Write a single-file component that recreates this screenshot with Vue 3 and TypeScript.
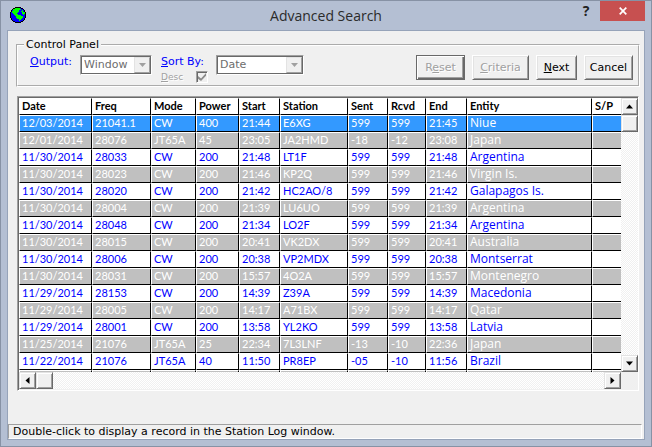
<script setup lang="ts">
import { ref } from 'vue'

type Entry = string[]

const columns: { name: string; width: number | null }[] = [
  { name: 'Date', width: 73 },
  { name: 'Freq', width: 59 },
  { name: 'Mode', width: 45 },
  { name: 'Power', width: 43 },
  { name: 'Start', width: 41 },
  { name: 'Station', width: 68 },
  { name: 'Sent', width: 40 },
  { name: 'Rcvd', width: 38 },
  { name: 'End', width: 41 },
  { name: 'Entity', width: 125 },
  { name: 'S/P', width: null }
]

const entries: Entry[] = [
  ['12/03/2014', '21041.1', 'CW', '400', '21:44', 'E6XG', '599', '599', '21:45', 'Niue', ''],
  ['12/01/2014', '28076', 'JT65A', '45', '23:05', 'JA2HMD', '-18', '-12', '23:08', 'Japan', ''],
  ['11/30/2014', '28033', 'CW', '200', '21:48', 'LT1F', '599', '599', '21:48', 'Argentina', ''],
  ['11/30/2014', '28023', 'CW', '200', '21:46', 'KP2Q', '599', '599', '21:46', 'Virgin Is.', ''],
  ['11/30/2014', '28020', 'CW', '200', '21:42', 'HC2AO/8', '599', '599', '21:42', 'Galapagos Is.', ''],
  ['11/30/2014', '28004', 'CW', '200', '21:39', 'LU6UO', '599', '599', '21:39', 'Argentina', ''],
  ['11/30/2014', '28048', 'CW', '200', '21:34', 'LO2F', '599', '599', '21:34', 'Argentina', ''],
  ['11/30/2014', '28015', 'CW', '200', '20:41', 'VK2DX', '599', '599', '20:41', 'Australia', ''],
  ['11/30/2014', '28006', 'CW', '200', '20:38', 'VP2MDX', '599', '599', '20:38', 'Montserrat', ''],
  ['11/30/2014', '28031', 'CW', '200', '15:57', '4O2A', '599', '599', '15:57', 'Montenegro', ''],
  ['11/29/2014', '28153', 'CW', '200', '14:39', 'Z39A', '599', '599', '14:39', 'Macedonia', ''],
  ['11/29/2014', '28005', 'CW', '200', '14:17', 'A71BX', '599', '599', '14:17', 'Qatar', ''],
  ['11/29/2014', '28001', 'CW', '200', '13:58', 'YL2KO', '599', '599', '13:58', 'Latvia', ''],
  ['11/25/2014', '21076', 'JT65A', '25', '22:34', '7L3LNF', '-13', '-10', '22:36', 'Japan', ''],
  ['11/22/2014', '21076', 'JT65A', '40', '11:50', 'PR8EP', '-05', '-10', '11:56', 'Brazil', '']
]

const selected = ref(0)
</script>

<template>
  <div class="window">
    <header class="titlebar">
      <svg class="globe" viewBox="0 0 16 16" shape-rendering="crispEdges" aria-hidden="true">
        <path fill="#000" d="M5 0h6v1h2v1h1v1h1v2h1v6h-1v2h-1v1h-1v1h-2v1H5v-1H3v-1H2v-1H1v-2H0V5h1V3h1V2h1V1h2z" />
        <path fill="#00f" d="M5 1h6v1h2v1h1v2h1v6h-1v2h-1v1h-2v1H5v-1H3v-1H2v-2H1V5h1V3h1V2h2z" />
        <path fill="#0f0" d="M5 1h5v1h1v1H9v2H8v1H7v1h1v1h3v1h2v2h-1v1h-1v1h-1v1H9v-2H7v-1H6V9H5V8H4V7H3V6H2V4h1V2h2zM12 3h1v2h2v2h-1v1h-1V7h-1V5h-1V4h1z" />
      </svg>
      <h1>Advanced Search</h1>
      <button class="help" type="button">?</button>
      <button class="close" type="button" aria-label="Close">
        <svg viewBox="0 0 8 8" aria-hidden="true"><path d="M.7.7l6.6 6.6M7.3.7L.7 7.3" stroke="#fff" stroke-width="1.7" /></svg>
      </button>
    </header>

    <main class="client">
      <fieldset class="panel">
        <legend>Control Panel</legend>
        <div class="controls">
          <label class="field" for="output"><u>O</u>utput:</label>
          <div class="combo combo-output">
            <select id="output" disabled><option>Window</option></select>
            <span class="drop"><svg viewBox="0 0 7 4"><path d="M0 0h7L3.500 4z" fill="#a0a0a0" /></svg></span>
          </div>
          <div class="sort">
            <label class="field" for="sort"><u>S</u>ort By:</label>
            <label class="desc"><span><u>D</u>esc</span><input type="checkbox" checked disabled /></label>
          </div>
          <div class="combo combo-sort">
            <select id="sort" disabled><option>Date</option></select>
            <span class="drop"><svg viewBox="0 0 7 4"><path d="M0 0h7L3.500 4z" fill="#a0a0a0" /></svg></span>
          </div>
          <div class="actions">
            <button class="push default w-reset" type="button" disabled>R<u>e</u>set</button>
            <button class="push w-criteria" type="button" disabled><u>C</u>riteria</button>
            <button class="push w-next" type="button"><u>N</u>ext</button>
            <button class="push w-cancel" type="button">Cancel</button>
          </div>
        </div>
      </fieldset>

      <section class="grid">
        <div class="sheet">
          <table>
            <colgroup>
              <col v-for="c in columns" :key="c.name" :style="c.width ? { width: c.width + 'px' } : {}" />
            </colgroup>
            <thead>
              <tr><th v-for="c in columns" :key="c.name" scope="col">{{ c.name }}</th></tr>
            </thead>
            <tbody>
              <tr v-for="(e, i) in entries" :key="i" :class="{ alt: i % 2 === 1, selected: i === selected }" @click="selected = i">
                <td v-for="(cell, j) in e" :key="j">{{ cell }}</td>
              </tr>
              <tr class="alt">
                <td v-for="c in columns" :key="c.name"></td>
              </tr>
            </tbody>
          </table>
        </div>
        <div class="track vertical">
          <button class="nub" type="button" aria-label="Scroll up"><svg viewBox="0 0 7 7"><path d="M0 5.500h7L3.500 1.500z" /></svg></button>
          <span class="nub"></span>
          <button class="nub last" type="button" aria-label="Scroll down"><svg viewBox="0 0 7 7"><path d="M0 1.500h7L3.500 5.500z" /></svg></button>
        </div>
        <div class="track">
          <button class="nub" type="button" aria-label="Scroll left"><svg viewBox="0 0 7 7"><path d="M5.500 0v7L1.500 3.500z" /></svg></button>
          <span class="nub"></span>
          <button class="nub last" type="button" aria-label="Scroll right"><svg viewBox="0 0 7 7"><path d="M1.500 0v7L5.500 3.500z" /></svg></button>
        </div>
      </section>

      <footer class="status">Double-click to display a record in the Station Log window.</footer>
    </main>
  </div>
</template>

<style>
body {
  margin: 0;
}
</style>

<style scoped>
* {
  box-sizing: border-box;
}
.window {
  display: flex;
  flex-direction: column;
  min-height: 100vh;
  padding: 0 6px 6px;
  border: 1px solid #8792a5;
  background: #b4bfd3;
  font: 11px/14px 'DejaVu Sans', sans-serif;
  color: #000;
}
.titlebar {
  display: flex;
  align-items: flex-start;
  height: 29px;
}
.globe {
  width: 16px;
  height: 16px;
  margin: 6px 0 0 3px;
}
h1 {
  flex: 1;
  margin: 4px 0 0 54px;
  font: 15px/22px 'Open Sans', sans-serif;
  font-size: 14px;
  color: #2b2b2b;
  text-align: center;
}
.help,
.close {
  padding: 0;
  border: 0;
}
.help {
  width: 28px;
  height: 20px;
  background: none;
  font: bold 14px/20px 'Open Sans', sans-serif;
  color: #222;
}
.close {
  display: grid;
  place-items: center;
  width: 45px;
  height: 20px;
  background: #c75050;
}
.close svg {
  width: 8px;
  height: 8px;
}
.client {
  flex: 1;
  display: flex;
  flex-direction: column;
  border: 1px solid #96a3b9;
  background: #f0f0f0;
}
.panel {
  min-width: 0;
  margin: 7px 4px 0 8px;
  padding: 3px 5px 2px 12px;
  border: 2px groove #fff;
}
legend {
  margin-left: -6px;
  padding: 0 2px;
}
.controls {
  display: flex;
  align-items: flex-start;
}
.field {
  height: 16px;
  color: #0000ff;
}
.combo {
  display: grid;
  height: 20px;
  border: 1px solid;
  border-color: #a0a0a0 #fff #fff #a0a0a0;
  box-shadow: inset 1px 1px #696969, inset -1px -1px #696969;
  background: #fff;
}
.combo-output {
  width: 72px;
}
.combo-sort {
  width: 88px;
  margin-left: 8px;
}
.controls > .field {
  width: 50px;
}
.combo select,
.drop {
  grid-area: 1 / 1;
}
.combo select {
  appearance: none;
  width: 100%;
  padding: 0 18px 0 3px;
  border: 0;
  background: none;
  font: 11px/18px 'DejaVu Sans', sans-serif;
  color: #6d6d6d;
  opacity: 1;
}
.drop {
  display: grid;
  place-items: center;
  justify-self: end;
  width: 16px;
  margin: 1px;
  border: 1px solid;
  border-color: #e3e3e3 #a0a0a0 #a0a0a0 #e3e3e3;
  background: #f0f0f0;
  pointer-events: none;
}
.drop svg {
  width: 7px;
  height: 4px;
}
.sort {
  width: 47px;
  margin-left: 9px;
}
.sort .field {
  display: block;
  white-space: nowrap;
}
.desc {
  display: flex;
  justify-content: space-between;
  height: 12px;
  font-size: 9px;
  line-height: 12px;
  color: #a0a0a0;
  text-shadow: 1px 1px #fff;
}
.desc input {
  appearance: none;
  width: 12px;
  height: 12px;
  margin: 0;
  border: 1px solid;
  border-color: #a0a0a0 #fff #fff #a0a0a0;
  box-shadow: inset 1px 1px #696969;
  background: #f0f0f0;
}
.desc input:checked::before {
  content: '';
  display: block;
  width: 8px;
  height: 8px;
  margin: 1px;
  background: #8c8c8c;
  clip-path: polygon(0 38%, 38% 68%, 100% 0, 100% 34%, 38% 100%, 0 72%);
}
.actions {
  display: flex;
  gap: 7px;
  margin-left: auto;
}
.push {
  height: 25px;
  padding: 0;
  border: 1px solid;
  border-color: #fff #696969 #696969 #fff;
  box-shadow: inset 1px 1px #e3e3e3, inset -1px -1px #a0a0a0;
  background: #f0f0f0;
  font: 11px/20px 'DejaVu Sans', sans-serif;
  color: #000;
}
.push:disabled {
  color: #a0a0a0;
  text-shadow: 1px 1px #fff;
}
.push.default {
  border-color: #696969;
  box-shadow: inset 1px 1px #fff, inset -1px -1px #696969, inset -2px -2px #a0a0a0;
}
.w-reset,
.w-cancel {
  width: 49px;
}
.w-criteria {
  width: 57px;
}
.w-next {
  width: 41px;
}
.grid {
  display: grid;
  grid-template-columns: minmax(0, 1fr) 17px;
  grid-template-rows: auto 17px;
  margin: 9px 5px 0 9px;
  border: 1px solid;
  border-color: #a0a0a0 #fff #fff #a0a0a0;
  box-shadow: inset 1px 1px #696969;
  padding: 1px 0 1px 1px;
}
.sheet {
  height: 274px;
  overflow: hidden;
  background: #fff;
}
table {
  width: 100%;
  table-layout: fixed;
  border-collapse: separate;
  border-spacing: 0;
  font: 11px/14px Lato, sans-serif;
}
th,
td {
  height: 17px;
  padding: 0 0 0 2px;
  border: 1px solid;
  border-color: #fff #000 #000 #fff;
  text-align: left;
  vertical-align: top;
  white-space: nowrap;
}
th {
  font-weight: bold;
}
th:last-child,
td:last-child {
  border-right: 0;
}
td {
  color: #0000ff;
}
td:nth-child(10) {
  font: 12px/14px 'Open Sans', sans-serif;
}
.alt td {
  background: #c0c0c0;
  background-clip: padding-box;
  color: #fff;
}
.selected td {
  background: #3399ff;
  background-clip: padding-box;
  color: #fff;
}
.track {
  display: flex;
  background: repeating-conic-gradient(#fff 0 25%, #f0f0f0 0 50%) 0 0 / 2px 2px;
}
.vertical {
  flex-direction: column;
}
.nub {
  display: grid;
  place-items: center;
  flex: none;
  width: 17px;
  height: 17px;
  padding: 0;
  border: 1px solid;
  border-color: #e3e3e3 #696969 #696969 #e3e3e3;
  box-shadow: inset 1px 1px #fff, inset -1px -1px #a0a0a0;
  background: #f0f0f0;
}
.nub svg {
  width: 7px;
  height: 7px;
}
.last {
  margin-left: auto;
}
.vertical .last {
  margin: auto 0 0;
}
.status {
  margin: auto 2px 0 0;
  padding-left: 4px;
  border: 1px solid;
  border-color: #a0a0a0 #fff #fff #a0a0a0;
  line-height: 13px;
}
</style>
